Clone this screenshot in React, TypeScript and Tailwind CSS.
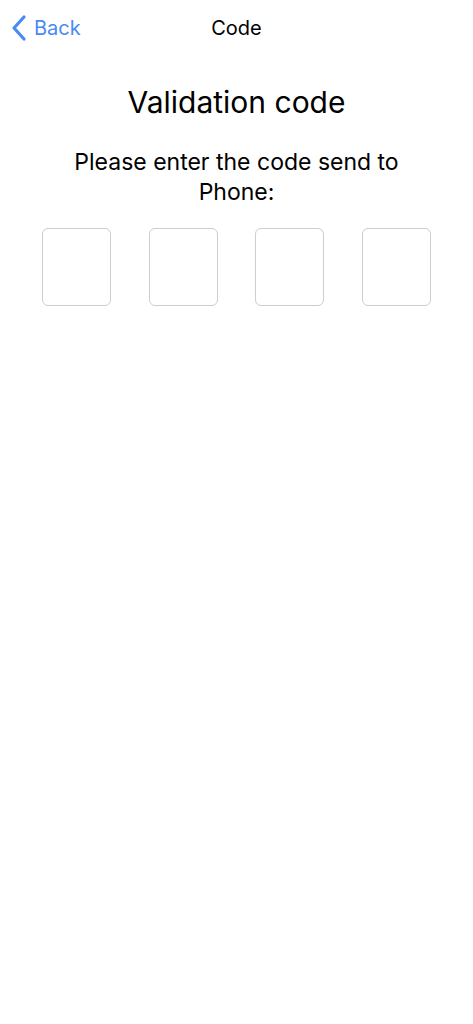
import React from 'react';

export default function App() {
  const digits = ['', '', '', ''];
  return (
    <div
      className="min-h-[1024px] w-full bg-white text-black"
      style={{ fontFamily: 'Inter, "Noto Sans", sans-serif' }}
    >
      <div className="relative flex h-[56px] items-center justify-center">
        <button className="absolute left-[10px] top-[14px] flex items-center gap-[6px] text-[#4a8af4]">
          <svg width="18" height="28" viewBox="0 0 18 28" fill="none">
            <path
              d="M14 3 L4 14 L14 25"
              stroke="currentColor"
              strokeWidth="3.2"
              strokeLinecap="round"
              strokeLinejoin="round"
            />
          </svg>
          <span className="text-[20px] leading-[28px]">Back</span>
        </button>
        <div className="text-[20px] font-normal leading-[28px]">Code</div>
      </div>
      <div className="flex flex-col items-center px-4">
        <h1 className="mt-[28px] text-[30px] font-normal leading-[36px]">Validation code</h1>
        <p className="mt-[27px] w-[380px] text-center text-[23px] leading-[30px]">
          Please enter the code send to Phone:
        </p>
      </div>
      <div className="mt-[21px] flex justify-between px-[42px]">
        {digits.map((d, i) => (
          <div
            key={i}
            className="flex h-[78px] w-[69px] items-center justify-center rounded-[6px] border border-[#cdcdd2] text-[28px]"
          >
            {d}
          </div>
        ))}
      </div>
    </div>
  );
}
